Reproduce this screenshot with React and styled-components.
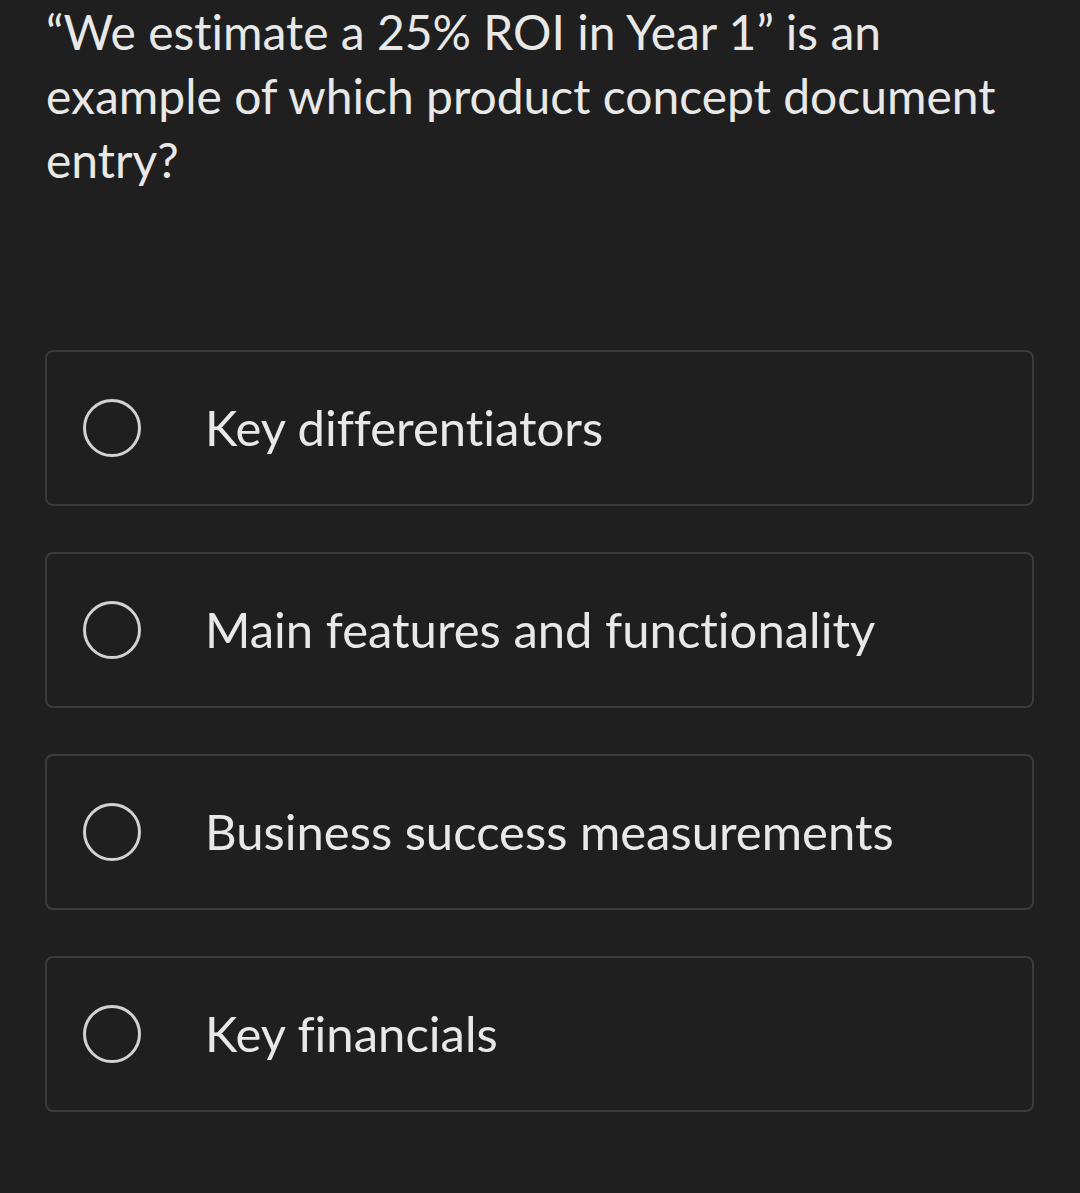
import styled, { createGlobalStyle } from 'styled-components';

const GlobalStyle = createGlobalStyle`
  html, body {
    margin: 0;
    padding: 0;
    background: #1f1f1f;
  }
  body {
    font-family: Lato, "Liberation Sans", sans-serif;
    color: #e6e6e6;
    font-variant-ligatures: none;
  }
`;

const options = [
  'Key differentiators',
  'Main features and functionality',
  'Business success measurements',
  'Key financials',
];

export default function App() {
  return (
    <Page>
      <GlobalStyle />
      <Question>
        “We estimate a 25% ROI in Year 1” is an example of which product concept document entry?
      </Question>
      <OptionList>
        {options.map((label) => (
          <Option key={label}>
            <Radio />
            <OptionLabel>{label}</OptionLabel>
          </Option>
        ))}
      </OptionList>
    </Page>
  );
}

const Page = styled.div`
  min-height: 1193px;
  padding: 0 24px 0 45px;
  box-sizing: border-box;
`;

const Question = styled.h1`
  margin: 0;
  padding-left: 1px;
  font-size: 48px;
  font-weight: 400;
  line-height: 64px;
  color: #e8e8e8;
`;

const OptionList = styled.div`
  display: flex;
  flex-direction: column;
  gap: 46px;
  margin: 158px 22px 0 0;
`;

const Option = styled.label`
  display: flex;
  align-items: center;
  height: 156px;
  box-sizing: border-box;
  border: 2px solid #3b3b3b;
  border-radius: 8px;
  padding-left: 36px;
  cursor: pointer;
`;

const Radio = styled.span`
  width: 58px;
  height: 58px;
  box-sizing: border-box;
  border: 3px solid #d2d2d2;
  border-radius: 50%;
  flex-shrink: 0;
`;

const OptionLabel = styled.span`
  margin-left: 64px;
  margin-top: -3px;
  font-size: 49px;
  color: #e8e8e8;
`;
